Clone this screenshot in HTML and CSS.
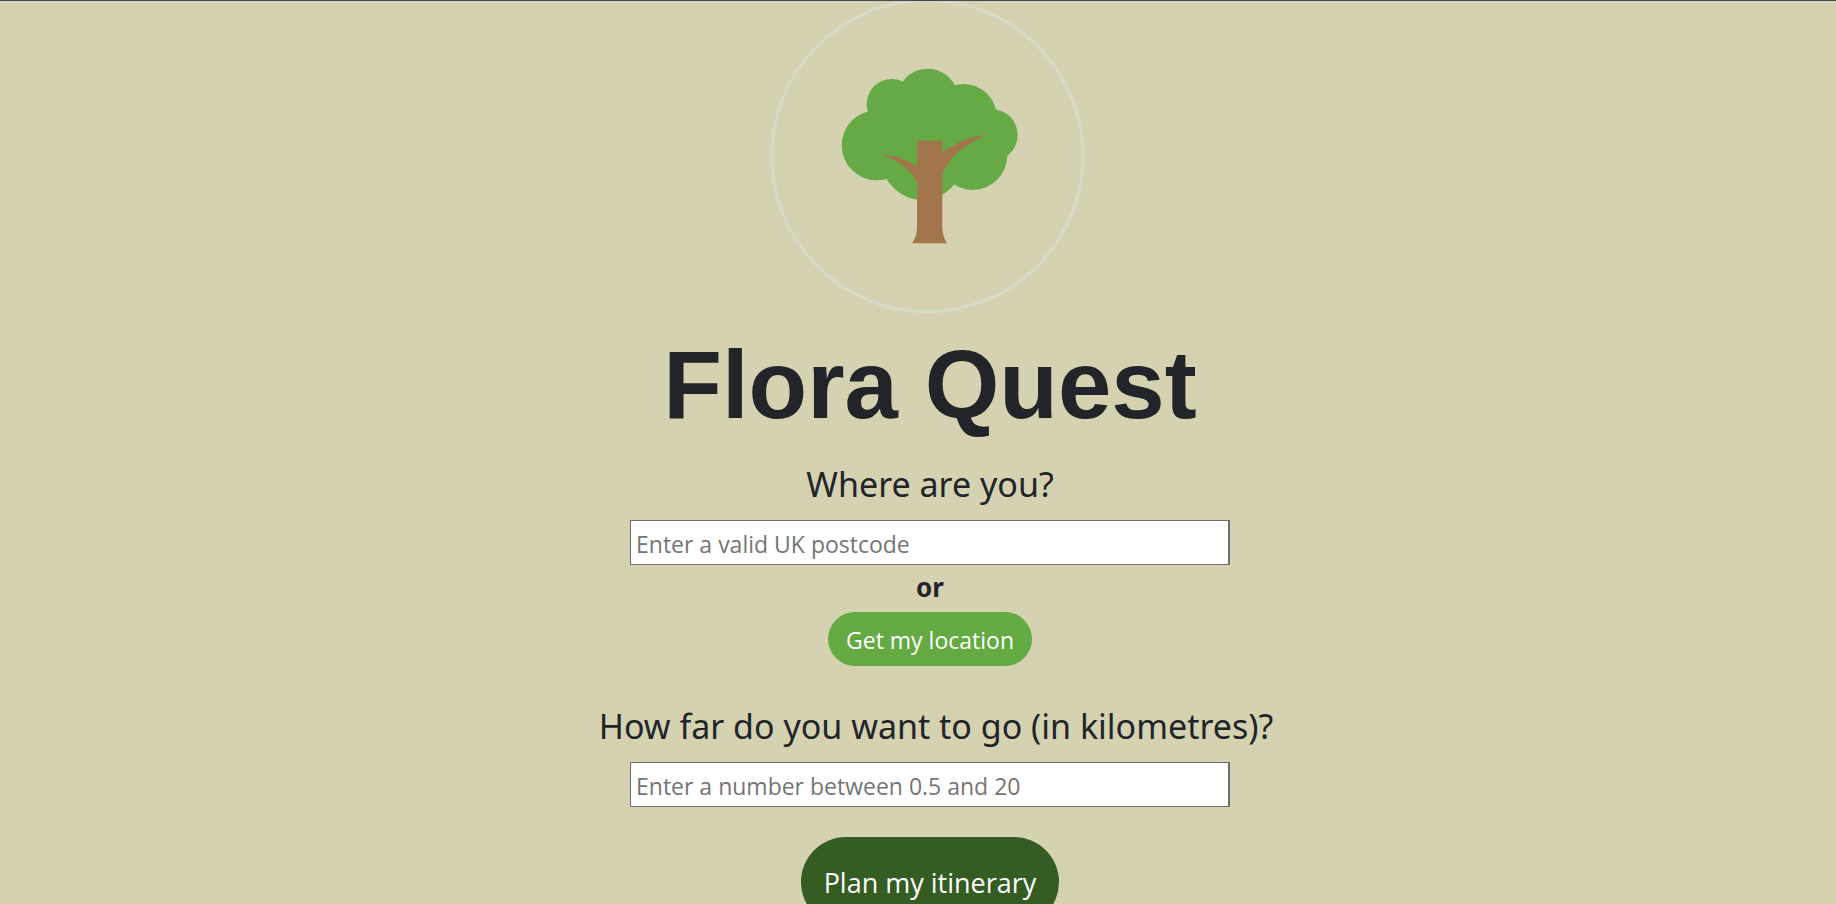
FILE: index.html
```html
<!DOCTYPE html>
<html lang="en">
<head>
<meta charset="utf-8">
<title>Flora Quest</title>
<link rel="stylesheet" href="styles.css">
</head>
<body>
<main class="page">
  <svg class="logo" viewBox="0 3 1080 936" role="img" aria-label="Tree">
    <circle class="logo-ring" cx="532" cy="468" r="467"/>
    <g class="logo-crown">
      <circle cx="380" cy="436" r="105"/>
      <circle cx="425" cy="312" r="75"/>
      <circle cx="533" cy="298" r="92"/>
      <circle cx="640" cy="353" r="101"/>
      <circle cx="726" cy="405" r="77"/>
      <circle cx="668" cy="466" r="104"/>
      <circle cx="517" cy="478" r="122"/>
      <path d="M380 300H680V480H380Z"/>
    </g>
    <path class="logo-trunk" d="M501 422H577V458C612 432 660 408 712 404C655 425 588 475 577 530V680C577 700 582 716 591 730H486C496 716 501 700 501 680V545C480 510 440 475 394 465C430 462 470 478 501 498Z"/>
  </svg>
  <h1 class="title">Flora Quest</h1>
  <form class="planner">
    <label class="question" for="postcode">Where are you?</label>
    <input class="field" id="postcode" type="text" placeholder="Enter a valid UK postcode">
    <p class="or">or</p>
    <button class="button button-locate" type="button">Get my location</button>
    <label class="question question-distance" for="distance">How far do you want to go (in kilometres)?</label>
    <input class="field" id="distance" type="text" placeholder="Enter a number between 0.5 and 20">
    <button class="button button-plan" type="submit">Plan my itinerary</button>
  </form>
</main>
</body>
</html>
```
FILE: styles.css
```css
* {
  box-sizing: border-box;
}

html {
  overflow: hidden;
}

body {
  margin: 0;
  border-top: 1px solid #424858;
  background: #d5d2b1;
  color: #212529;
  font-family: "Segoe UI", "Noto Sans", "Open Sans", sans-serif;
}

.page {
  display: flex;
  flex-direction: column;
  align-items: center;
  padding-left: 24px;
}

.logo {
  display: block;
  width: 360px;
}

.logo-ring {
  fill: none;
  stroke: #d7dac6;
  stroke-width: 9;
}

.logo-crown {
  fill: #65aa44;
}

.logo-trunk {
  fill: #a3754b;
}

.title {
  margin: 15px 0 17px;
  font-family: "Liberation Sans", Arial, sans-serif;
  font-size: 96px;
  line-height: 114px;
}

.planner {
  display: flex;
  flex-direction: column;
  align-items: center;
}

.question {
  margin-bottom: 11px;
  font-size: 34px;
  font-weight: 400;
  line-height: 50px;
}

.question-distance {
  margin-top: 35px;
  padding-left: 12px;
}

.field {
  width: 600px;
  max-width: 100%;
  height: 45px;
  padding: 3px 5px 0;
  border: 1px solid #6f6f73;
  border-right-width: 2px;
  background: #fff;
  color: #212529;
  font: 23px/36px "Segoe UI", "Open Sans", "Noto Sans", sans-serif;
}

.field::placeholder {
  color: #757575;
}

.or {
  margin: 4px 0 7px;
  font-size: 26px;
  font-weight: 700;
  line-height: 36px;
}

.button {
  border: 0;
  color: #fff;
  font-family: "Segoe UI", "Open Sans", "Noto Sans", sans-serif;
}

.button-locate {
  height: 54px;
  padding: 2px 18px 0;
  border-radius: 27px;
  background: #62aa41;
  font-size: 23px;
}

.button-plan {
  height: 90px;
  margin-top: 30px;
  padding: 0 23px;
  border-radius: 45px;
  background: #345c23;
  font-size: 27px;
}
```
